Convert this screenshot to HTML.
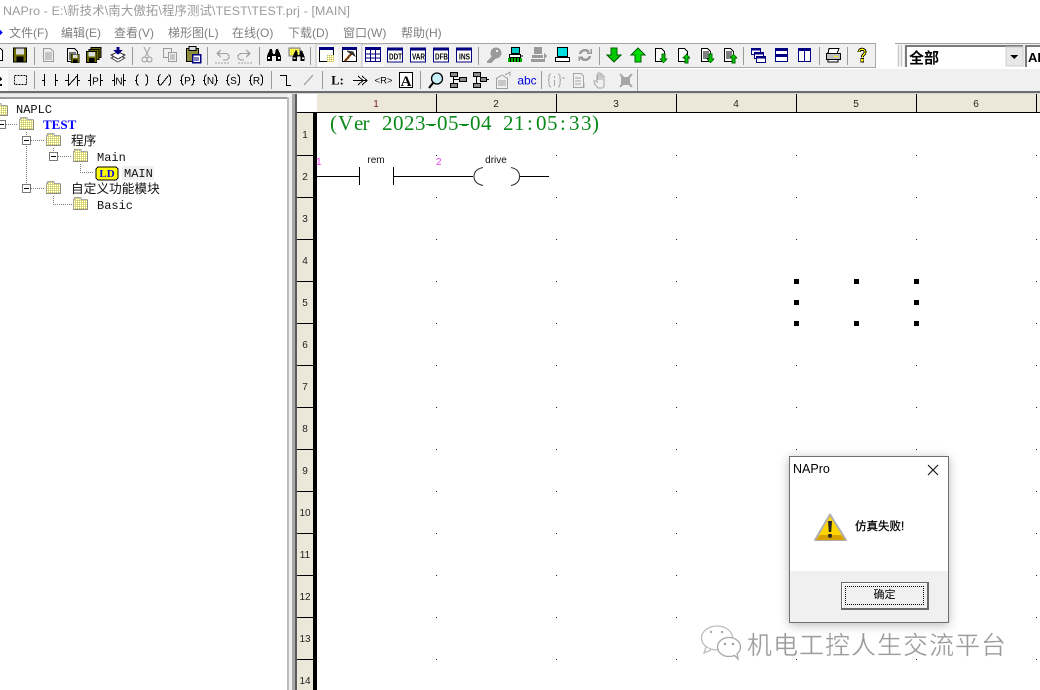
<!DOCTYPE html>
<html><head><meta charset="utf-8"><title>NAPro</title>
<style>
html,body{margin:0;padding:0;background:#fff;width:1040px;height:690px;overflow:hidden}
svg{display:block;position:absolute;left:0;top:0}
text{font-family:"Liberation Sans","Noto Sans CJK SC",sans-serif}
.m{font-size:12px;fill:#808080}
.n{font-size:10px;fill:#222;text-anchor:middle}
.t{font-family:"Liberation Mono","Noto Sans CJK SC",monospace;font-size:12px;fill:#111}
.c{font-family:"Liberation Sans","WenQuanYi Zen Hei",sans-serif;font-size:12.7px;fill:#111}
.s{fill:#9a9a9a}
.k{font-size:10px;fill:#000;text-anchor:middle}
.nv{fill:#fff;stroke:#000080;stroke-width:1.4}
.lb{font-size:8px;font-weight:bold;fill:#000}
</style></head><body>
<svg width="1040" height="690" viewBox="0 0 1040 690" shape-rendering="crispEdges">
<defs>
<pattern id="dots" x="436" y="155" width="120" height="42" patternUnits="userSpaceOnUse"><rect width="1" height="1" fill="#222"/></pattern>
<pattern id="dy" width="2" height="2" patternUnits="userSpaceOnUse"><rect width="2" height="2" fill="#f6f06a"/><rect width="1" height="1" fill="#b0b0a0"/><rect x="1" y="1" width="1" height="1" fill="#fff"/></pattern>
<g id="folder"><path d="M0 3h1V1h7v2h7v11H0z" fill="url(#dy)" stroke="none"/><path d="M0.5 13.5V3.5H1.5V1.5H8V3.5H14.5" fill="none" stroke="#a8a8a8"/><path d="M0 13.5H15M14.5 4V13" stroke="#8c8c8c" fill="none"/></g>
<g id="minus"><rect x=".5" y=".5" width="8" height="8" fill="#fff" stroke="#777"/><path d="M2 4.5h5" stroke="#000"/></g>
<g id="disk"><rect x="0.500" y="0.500" width="13" height="14" fill="#6c6c00" stroke="#000"/><rect x="3" y="1" width="8" height="6" fill="#ddd"/><rect x="3.500" y="9" width="7" height="6" fill="#000"/></g>
<g id="page"><path d="M2.500 1.500H9.500L12.500 4.500V14.500H2.500Z" fill="#f0f0f0" stroke="#000"/><path d="M4 6h7M4 8h7M4 10h7M4 12h7" stroke="#000" stroke-width=".8"/></g>
<g id="gpage"><path d="M2.500 1.500H9.500L12.500 4.500V14.500H2.500Z" fill="#f0f0f0" stroke="#9a9a9a"/><path d="M4 6h7M4 8h7M4 10h7M4 12h7" stroke="#9a9a9a" stroke-width=".8"/></g>
<g id="bino"><path d="M2 14V9L5 2H7L8 7H10L11 2H13L16 9V14H11V9H7V14Z" fill="#000"/><rect x="3" y="10" width="2" height="2" fill="#fff"/><rect x="13" y="10" width="2" height="2" fill="#fff"/></g>
<g id="dn"><path d="M5 1h6v7h4L8 15 1 8h4z" fill="#00c800" stroke="#006000"/></g>
<g id="up"><path d="M5 15h6V8h4L8 1 1 8h4z" fill="#00e000" stroke="#006000"/></g>
<g id="docs"><path d="M2.500 1.500H8.500L11.500 4.500V14.500H2.500Z" fill="#fff" stroke="#000"/></g>
<g id="lst"><path d="M1.500 1.500H7.500L10.500 4.500V14.500H1.500Z" fill="#fff" stroke="#000"/><path d="M3 5h6M3 7h6M3 9h6M3 11h6" stroke="#000" stroke-width=".8"/></g>
</defs>

<!-- title -->
<text x="3" y="15" textLength="347" lengthAdjust="spacing" style="font-size:12.4px;fill:#9b9b9b">NAPro - E:\新技术\南大傲拓\程序测试\TEST\TEST.prj - [MAIN]</text>

<!-- menu -->
<path d="M0 30l3 2.500-3 2.500z" fill="#00f"/>
<text class="m" x="9" y="37">文件(F)</text>
<text class="m" x="61" y="37">编辑(E)</text>
<text class="m" x="114" y="37">查看(V)</text>
<text class="m" x="168" y="37">梯形图(L)</text>
<text class="m" x="232" y="37">在线(O)</text>
<text class="m" x="288" y="37">下载(D)</text>
<text class="m" x="343" y="37">窗口(W)</text>
<text class="m" x="401" y="37">帮助(H)</text>

<!-- toolbars bg -->
<rect x="0" y="43" width="1040" height="49" fill="#f0f0f0"/>
<rect x="876" y="43" width="20" height="25" fill="#fff"/>
<rect x="0" y="43" width="875" height="1" fill="#a3a3a3"/>
<rect x="895" y="43" width="145" height="1" fill="#a3a3a3"/>
<rect x="0" y="67" width="875" height="1" fill="#a8a8a8"/>
<rect x="875" y="43" width="1" height="25" fill="#a8a8a8"/>
<rect x="895" y="67" width="145" height="1" fill="#fff"/>
<rect x="0" y="68" width="1040" height="1" fill="#fff"/>
<rect x="0" y="91" width="1040" height="2" fill="#6d6d6d"/>
<rect x="637" y="69" width="1" height="22" fill="#a8a8a8"/>
<rect x="0" y="93" width="1040" height="1" fill="#d8d8d8"/>

<!-- separators -->
<g class="s">
<rect x="34" y="47" width="1" height="18"/><rect x="132" y="47" width="1" height="18"/><rect x="207" y="47" width="1" height="18"/><rect x="259" y="47" width="1" height="18"/><rect x="310" y="47" width="1" height="18"/><rect x="478" y="47" width="1" height="18"/><rect x="599" y="47" width="1" height="18"/><rect x="743" y="47" width="1" height="18"/><rect x="819" y="47" width="1" height="18"/><rect x="847" y="47" width="1" height="18"/>
<rect x="34" y="71" width="1" height="18"/><rect x="271" y="71" width="1" height="18"/><rect x="322" y="71" width="1" height="18"/><rect x="420" y="71" width="1" height="18"/><rect x="541" y="71" width="1" height="18"/>
</g>

<!-- toolbar 1 icons -->
<path d="M-5 48.500H0.500L2.500 50.500V60.500H-5" fill="#fff" stroke="#000"/>
<use href="#disk" x="13" y="47.500"/>
<use href="#gpage" x="41" y="47"/>
<use href="#page" x="65" y="47"/><use href="#disk" transform="translate(71,54) scale(.6)"/>
<g transform="translate(86,47)"><rect x="5" y="0.500" width="10" height="10" fill="#6c6c00" stroke="#000"/><rect x="3" y="2.500" width="10" height="10" fill="#6c6c00" stroke="#000"/><use href="#disk" transform="translate(0,4) scale(.8)"/></g>
<g transform="translate(110,47)"><path d="M8 8L15 11 8 15 1 11Z" fill="#fff" stroke="#555"/><path d="M8 5L15 8 8 12 1 8Z" fill="#fff" stroke="#333"/><path d="M6.500 0h3v3h3L8 8 3.500 3h3z" fill="#000080"/></g>
<g transform="translate(139,47)" fill="none" stroke="#9a9a9a"><path d="M5 0L10 10M11 0L6 10"/><circle cx="5.500" cy="12.500" r="2.500"/><circle cx="10.500" cy="12.500" r="2.500"/></g>
<g transform="translate(162,47)" stroke="#9a9a9a" fill="#f0f0f0"><rect x="1.500" y="1.500" width="8" height="9"/><rect x="6.500" y="5.500" width="8" height="9"/><path d="M8 8h5M8 10h5M8 12h5" stroke-width=".8"/></g>
<g transform="translate(185,46)"><rect x="1.500" y="2.500" width="12" height="13" fill="#8c8c3c" stroke="#000"/><rect x="4" y="0.500" width="7" height="4" fill="#ddd" stroke="#000"/><rect x="7.500" y="8.500" width="8" height="8" fill="#fff" stroke="#000080" stroke-width="1.500"/><path d="M9 12h5M9 14h5" stroke="#000080"/></g>
<g transform="translate(214,48)" fill="none" stroke="#a0a0a0" stroke-width="1.200"><path d="M3 5.500H11C14 5.500 15 7 15 9S13 12 11 12H9"/><path d="M7 2L3 5.500 7 9"/><path d="M1 15H15" stroke-dasharray="2 1"/></g>
<g transform="translate(237,48)" fill="none" stroke="#a0a0a0" stroke-width="1.200"><path d="M13 5.500H5C2 5.500 1 7 1 9S3 12 5 12H7"/><path d="M9 2L13 5.500 9 9"/><path d="M1 15H15" stroke-dasharray="2 1"/></g>
<use href="#bino" x="265" y="47"/>
<g transform="translate(287,46)"><rect x="2" y="2" width="11" height="8" fill="url(#dy)" stroke="#777"/><rect x="3" y="3" width="9" height="6" fill="#ffff00" opacity=".6"/><use href="#bino" transform="translate(4,3) scale(.85)"/></g>

<rect x="316" y="44" width="22" height="23" fill="#fafafa"/><path d="M316 67V44H338" stroke="#bdbdbd" fill="none"/>
<g transform="translate(319,47)"><rect x=".5" y=".5" width="14" height="14" fill="#fff" stroke="#000"/><rect x="0" y="0" width="15" height="3" fill="#000080"/><rect x="8" y="8" width="7" height="7" fill="url(#dy)"/></g>
<g transform="translate(342,47)"><rect x=".5" y=".5" width="14" height="14" fill="#fff" stroke="#000"/><rect x="0" y="0" width="15" height="3" fill="#000080"/><path d="M3 14L10 6" stroke="#7a3a00" stroke-width="2.200"/><path d="M5 4L13 9 11 5Z" fill="#333" stroke="#333"/></g>
<rect x="362" y="44" width="22" height="23" fill="#fafafa"/><path d="M362 67V44H384" stroke="#bdbdbd" fill="none"/>
<g transform="translate(365,47)"><rect x=".5" y=".5" width="15" height="14" fill="#fff" stroke="#000080"/><rect x="0" y="0" width="16" height="3" fill="#000080"/><path d="M0 7H16M0 11H16M5.500 3V15M10.500 3V15" stroke="#000080"/></g>

<g transform="translate(387,47.500)"><rect x=".5" y=".5" width="15" height="14" fill="#fff" stroke="#000080"/><rect width="16" height="3" fill="#000080"/><text class="lb" x="2" y="12" textLength="13" lengthAdjust="spacingAndGlyphs">DDT</text></g>
<g transform="translate(410,47.500)"><rect x=".5" y=".5" width="15" height="14" fill="#fff" stroke="#000080"/><rect width="16" height="3" fill="#000080"/><text class="lb" x="2" y="12" textLength="13" lengthAdjust="spacingAndGlyphs">VAR</text></g>
<g transform="translate(433,47.500)"><rect x=".5" y=".5" width="15" height="14" fill="#fff" stroke="#000080"/><rect width="16" height="3" fill="#000080"/><text class="lb" x="2" y="12" textLength="13" lengthAdjust="spacingAndGlyphs">DFB</text></g>
<g transform="translate(456,47.500)"><rect x=".5" y=".5" width="15" height="14" fill="#fff" stroke="#000080"/><rect width="16" height="3" fill="#000080"/><text class="lb" x="3" y="12" textLength="11" lengthAdjust="spacingAndGlyphs">INS</text></g>

<g transform="translate(486,47)"><circle cx="10" cy="6" r="5.500" fill="#9a9a9a"/><path d="M7 8L1 14V16H5L11 10" fill="#9a9a9a"/><rect x="10" y="3" width="2" height="2" fill="#f0f0f0"/></g>
<g transform="translate(507,47)"><rect x="4.500" y="0.500" width="8" height="6" fill="#00c8c8" stroke="#000"/><rect x="2.500" y="7.500" width="11" height="3" fill="#fff" stroke="#000"/><path d="M13 9h3" stroke="#000"/><rect x="1" y="11" width="14" height="4" fill="#00b000"/><path d="M3.500 11v4M6.500 11v4M9.500 11v4M12.500 11v4" stroke="#000"/></g>
<g transform="translate(530,47)" fill="#9a9a9a"><rect x="4" y="0" width="8" height="7"/><rect x="2" y="8" width="11" height="3"/><rect x="1" y="12" width="14" height="3"/><path d="M14 6l3 3-3 3z"/></g>
<g transform="translate(554,47)"><rect x="3.500" y="0.500" width="10" height="9" fill="#00e0e0" stroke="#000"/><rect x="1.500" y="10.500" width="14" height="4" fill="#fff" stroke="#000"/></g>
<g transform="translate(577,47)" fill="none" stroke="#9a9a9a" stroke-width="2.500"><path d="M3 7C4 3 9 2 12 5"/><path d="M13 9C12 13 7 14 4 11"/><path d="M10 6H14V2" stroke-width="1.500"/><path d="M6 10H2V14" stroke-width="1.500"/></g>
<use href="#dn" x="606" y="47"/><use href="#up" x="630" y="47"/>
<g transform="translate(653,47)"><use href="#docs"/><path d="M9 7h3v5h2l-3.500 4L7 12h2z" fill="#00c800" stroke="#006000" stroke-width=".7"/></g>
<g transform="translate(676,47)"><use href="#docs"/><path d="M9 16h3v-5h2L10.500 7 7 11h2z" fill="#00c800" stroke="#006000" stroke-width=".7"/></g>
<g transform="translate(700,47)"><use href="#lst"/><path d="M9 7h3v5h2l-3.500 4L7 12h2z" fill="#00c800" stroke="#006000" stroke-width=".7"/></g>
<g transform="translate(723,47)"><use href="#lst"/><path d="M9 16h3v-5h2L10.500 7 7 11h2z" fill="#00c800" stroke="#006000" stroke-width=".7"/></g>
<g transform="translate(751,48)"><rect class="nv" x="0.500" y="0.500" width="9" height="6"/><rect x="0" y="0" width="10" height="2.500" fill="#000080"/><rect class="nv" x="3.500" y="4.500" width="9" height="6"/><rect x="3" y="4" width="10" height="2.500" fill="#000080"/><rect class="nv" x="5.500" y="8.500" width="9" height="6"/><rect x="5" y="8" width="10" height="2.500" fill="#000080"/></g>
<g transform="translate(775,48)"><rect x=".5" y=".5" width="12" height="13" fill="#fff" stroke="#000080" stroke-width="1.300"/><rect width="13" height="3" fill="#000080"/><rect y="6" width="13" height="3" fill="#000080"/></g>
<g transform="translate(798,48)"><rect x=".5" y=".5" width="12" height="13" fill="#fff" stroke="#000080" stroke-width="1.300"/><rect width="13" height="3" fill="#000080"/><rect x="6" width="1" height="14" fill="#000080"/></g>
<g transform="translate(825,48)"><path d="M4 .5H14L12 5.500H3Z" fill="#fff" stroke="#000"/><path d="M1.500 5.500H15.500V11.500H1.500Z" fill="#c0c0c0" stroke="#000"/><path d="M3 11.500H13V14H3Z" fill="#fff" stroke="#000"/><rect x="9" y="8" width="4" height="1" fill="#ff0"/></g>
<g transform="translate(856.500,47.500) scale(.72,.85)" fill="none"><path d="M3.500 5.500C3.500 1 12 1 12 5.500C12 8 8 8.500 8 11.500" stroke="#000" stroke-width="3.800"/><path d="M3.500 5.500C3.500 1 12 1 12 5.500C12 8 8 8.500 8 11.500" stroke="#ff0" stroke-width="1.600"/><rect x="6" y="13" width="4" height="4" fill="#ff0" stroke="#000"/></g>

<!-- combos -->
<rect x="896" y="44" width="1" height="23" fill="#fff"/><rect x="898" y="45" width="1" height="21" fill="#c8c8c8"/><rect x="901" y="45" width="1" height="21" fill="#c8c8c8"/><rect x="903" y="45" width="1" height="21" fill="#fff"/>
<rect x="906" y="46" width="117" height="21" fill="#fff"/>
<path d="M906 67V46H1023" fill="none" stroke="#7a7a7a" stroke-width="2"/>
<rect x="1006" y="47" width="17" height="19" fill="#e8e8e8" stroke="#cfcfcf"/>
<path d="M1010 55h8l-4 4z" fill="#000"/>
<text x="909" y="63" style="font-size:15px;font-weight:bold;fill:#000;font-family:'WenQuanYi Zen Hei','Noto Sans CJK SC',sans-serif">全部</text>
<rect x="1026" y="46" width="14" height="21" fill="#fff"/>
<path d="M1026 67V46H1040" fill="none" stroke="#7a7a7a" stroke-width="2"/>
<text x="1028" y="62" style="font-size:13px;font-weight:bold;fill:#000">AD</text>

<!-- toolbar 2 -->
<rect x="0" y="69" width="8" height="22" fill="#fafafa"/>
<path d="M0 77l2 2-2 2zM0 84h2v2H0z" fill="#000"/>
<rect x="14.500" y="75.500" width="12" height="9" fill="none" stroke="#000" stroke-dasharray="2 1"/>
<g stroke="#000" fill="none">
<path d="M42 80.500h2M44.500 74v12M55.500 74v12M56 80.500h2"/>
<path d="M65 80.500h3M68.500 74v12M77.500 74v12M78 80.500h2M69 85l8-9"/>
<path d="M88 80.500h2M90.500 74v12M100.500 74v12M101 80.500h2"/>
<path d="M112 80.500h2M114.500 74v12M123.500 74v12M124 80.500h2"/>
<path d="M135 80.500h1M138.500 74.500c-2 1-2 3-2 5.500s0 4.500 2 5.500M145.500 74.500c2 1 2 3 2 5.500s0 4.500-2 5.500M147 80.500h1"/>
<path d="M157 80.500h1M160.500 74.500c-2 1-2 3-2 5.500s0 4.500 2 5.500M168.500 74.500c2 1 2 3 2 5.500s0 4.500-2 5.500M170 80.500h1M161 85l7-9"/>
<path d="M180 80.500h1M183.500 74.500c-2 1-2 3-2 5.500s0 4.500 2 5.500M191.500 74.500c2 1 2 3 2 5.500s0 4.500-2 5.500M193 80.500h2"/>
<path d="M203 80.500h1M206.500 74.500c-2 1-2 3-2 5.500s0 4.500 2 5.500M214.500 74.500c2 1 2 3 2 5.500s0 4.500-2 5.500M216 80.500h2"/>
<path d="M226 80.500h1M229.500 74.500c-2 1-2 3-2 5.500s0 4.500 2 5.500M237.500 74.500c2 1 2 3 2 5.500s0 4.500-2 5.500M239 80.500h1"/>
<path d="M249 80.500h1M252.500 74.500c-2 1-2 3-2 5.500s0 4.500 2 5.500M260.500 74.500c2 1 2 3 2 5.500s0 4.500-2 5.500M262 80.500h1"/>
<path d="M280 75.500h6.500V85.500H291"/>
</g>
<path d="M304 85l9-10" stroke="#a8a8a8" fill="none" stroke-width="1.400" shape-rendering="auto"/>
<text class="k" x="95.500" y="84.500">P</text>
<text class="k" x="119" y="84.500">N</text>
<text class="k" x="187.500" y="84">P</text>
<text class="k" x="210.500" y="84">N</text>
<text class="k" x="233.500" y="84">S</text>
<text class="k" x="256.500" y="84">R</text>
<text x="337.500" y="84.500" text-anchor="middle" style="font-family:'Liberation Serif',serif;font-size:12.500px;font-weight:bold;fill:#000">L:</text>
<path d="M353 80.500h13M358 76l5 4.500-5 4.500M362 76l5 4.500-5 4.500" fill="none" stroke="#000"/>
<text x="383.500" y="83.500" text-anchor="middle" style="font-size:9.500px;fill:#000">&lt;R&gt;</text>
<rect x="399.500" y="72.500" width="13" height="15" fill="#fff" stroke="#000"/>
<text x="406" y="86" text-anchor="middle" style="font-family:'Liberation Serif',serif;font-size:15px;font-weight:bold;fill:#000">A</text>
<g shape-rendering="auto"><circle cx="437" cy="78.500" r="5.500" fill="#c8f0f8" stroke="#000" stroke-width="1.300"/><path d="M433 83l-4 5" stroke="#000" stroke-width="2"/></g>
<g stroke="#000" fill="#8c8c8c"><rect x="450.500" y="72.500" width="7" height="4"/><rect x="450.500" y="83.500" width="7" height="4"/><rect x="459.500" y="77.500" width="7" height="4"/><path d="M453.500 77v6M454 79.500h5" fill="none"/></g>
<g stroke="#000" fill="#8c8c8c"><rect x="473.500" y="72.500" width="7" height="4"/><rect x="473.500" y="83.500" width="7" height="4"/><rect x="480.500" y="77.500" width="6" height="4"/><path d="M476.500 77v6M487 79.500h2" fill="none"/></g>
<g fill="none" stroke="#a0a0a0"><path d="M496.500 78.500L502 75l5.500 3.500V88.500H496.500Z"/><path d="M498 81h8M498 83h8M498 85h8M505 75l5-3v4"/></g>
<text x="527" y="84.500" text-anchor="middle" style="font-size:12px;fill:#0000e0">abc</text>
<g fill="none" stroke="#a6a6a6"><path d="M551 74c-2 0-2 2-2 4s-1 2-1 2 1 0 1 2 0 5 2 5M558 74c2 0 2 2 2 4s1 2 1 2-1 0-1 2 0 5-2 5M554.500 76v2M554.500 80v6M562 78h3"/>
<path d="M573.500 73.500H581L583.500 76V87.500H573.500ZM575 78h6M575 81h6M575 84h6M584 83v5l-2-1"/>
<path d="M598 88c-3-3-4-5-4-7 1-1 2 0 3 1V75h1v5-7h2v7-6h2v6-4h2v9c0 2-1 3-2 3z"/>
<path d="M620 74l12 13M632 74l-12 13" stroke-width="2"/></g>
<rect x="621" y="77" width="9" height="8" fill="#a6a6a6"/>

<!-- left pane -->
<rect x="0" y="94" width="297" height="596" fill="#fff"/>
<rect x="0" y="94" width="288" height="3" fill="#ededed"/>
<rect x="0" y="97" width="288" height="2" fill="#9c9c9c"/>
<rect x="287" y="97" width="2" height="593" fill="#bcbcbc"/>
<rect x="289" y="94" width="3" height="596" fill="#f0f0f0"/>
<rect x="292" y="94" width="3" height="596" fill="#a8a8a8"/>
<rect x="295" y="94" width="2" height="596" fill="#5c5c5c"/>

<!-- tree lines -->
<g stroke="#777" stroke-dasharray="1 1" fill="none">
<path d="M6 124.500H17"/>
<path d="M26.500 132V188"/><path d="M31 140.500H45M31 188.500H45"/>
<path d="M53.500 148V156"/><path d="M58 156.500H72"/>
<path d="M80.500 164V172.500H94"/>
<path d="M53.500 196V204.500H72"/>
</g>
<use href="#folder" x="-7" y="102"/>
<use href="#minus" x="-3" y="120"/>
<use href="#folder" x="19" y="116"/>
<use href="#minus" x="22" y="136"/><use href="#folder" x="46" y="132"/>
<use href="#minus" x="49" y="152"/><use href="#folder" x="73" y="148"/>
<use href="#minus" x="22" y="184"/><use href="#folder" x="46" y="180"/>
<use href="#folder" x="73" y="196"/>
<text class="t" x="16" y="113" style="font-size:12px">NAPLC</text>
<text x="43" y="129" style="font-family:'Liberation Serif',serif;font-size:13px;font-weight:bold;fill:#0000ff">TEST</text>
<text class="c" x="71" y="145">程序</text>
<text class="t" x="97" y="161">Main</text>
<rect x="96" y="167" width="22" height="13" rx="3" fill="#ffff00" stroke="#000" stroke-width="1"/>
<text x="107" y="177" text-anchor="middle" style="font-family:'Liberation Serif',serif;font-size:11px;font-weight:bold;fill:#0000e0">LD</text>
<rect x="122" y="166" width="32" height="14" fill="#f0f0f0"/>
<text class="t" x="124" y="177">MAIN</text>
<text class="c" x="71" y="193">自定义功能模块</text>
<text class="t" x="97" y="209">Basic</text>

<!-- grid -->
<rect x="297" y="94" width="743" height="596" fill="#fff"/>
<rect x="317" y="94" width="723" height="18" fill="#ebe8d9"/>
<rect x="317" y="112" width="723" height="1" fill="#000"/>
<rect x="436" y="94" width="1" height="18" fill="#000"/><rect x="556" y="94" width="1" height="18" fill="#000"/><rect x="676" y="94" width="1" height="18" fill="#000"/><rect x="796" y="94" width="1" height="18" fill="#000"/><rect x="916" y="94" width="1" height="18" fill="#000"/><rect x="1036" y="94" width="1" height="18" fill="#000"/>
<rect x="297" y="113" width="16" height="577" fill="#ebe8d9"/>
<rect x="297" y="112" width="16" height="1" fill="#000"/>
<rect x="313" y="112" width="4" height="578" fill="#000"/>
<g fill="#000"><rect x="297" y="155" width="16" height="1"/><rect x="297" y="197" width="16" height="1"/><rect x="297" y="239" width="16" height="1"/><rect x="297" y="281" width="16" height="1"/><rect x="297" y="323" width="16" height="1"/><rect x="297" y="365" width="16" height="1"/><rect x="297" y="407" width="16" height="1"/><rect x="297" y="449" width="16" height="1"/><rect x="297" y="491" width="16" height="1"/><rect x="297" y="533" width="16" height="1"/><rect x="297" y="575" width="16" height="1"/><rect x="297" y="617" width="16" height="1"/><rect x="297" y="659" width="16" height="1"/></g>
<g shape-rendering="auto">
<text class="n" x="376" y="107" style="fill:#702030">1</text><text class="n" x="496" y="107">2</text><text class="n" x="616" y="107">3</text><text class="n" x="736" y="107">4</text><text class="n" x="856" y="107">5</text><text class="n" x="976" y="107">6</text>
<text class="n" x="305" y="138">1</text><text class="n" x="305" y="180">2</text><text class="n" x="305" y="222">3</text><text class="n" x="305" y="264">4</text><text class="n" x="305" y="306">5</text><text class="n" x="305" y="348">6</text><text class="n" x="305" y="390">7</text><text class="n" x="305" y="432">8</text><text class="n" x="305" y="474">9</text><text class="n" x="305" y="516">10</text><text class="n" x="305" y="558">11</text><text class="n" x="305" y="600">12</text><text class="n" x="305" y="642">13</text><text class="n" x="305" y="684">14</text>
</g>
<rect x="436" y="155" width="604" height="535" fill="url(#dots)"/>

<text x="330 338 354 362.500 372 382 393 404 415 428 437 448 461 470 481 492 503 514 527 536 547 560 569 581 592" y="130" style="font-family:'Liberation Serif',serif;font-size:21px;fill:#0a8a1a">(Ver 2023-05-04 21:05:33)</text>
<rect x="426" y="124" width="10" height="1" fill="#0a8a1a"/><rect x="459" y="124" width="10" height="1" fill="#0a8a1a"/>

<!-- rung -->
<g stroke="#000" fill="none"><path d="M317 176.500H359M359.500 167V185M393.500 167V185M394 176.500H473M520 176.500H549"/></g>
<g shape-rendering="auto" fill="none" stroke="#333" stroke-width="1.100"><path d="M483 167.500C476 169 474 173 474 176.500S476 184 483 185.500"/><path d="M511 167.500C518 169 519.500 173 519.500 176.500S518 184 511 185.500"/></g>
<text x="376" y="163" text-anchor="middle" style="font-size:10px;fill:#111">rem</text>
<text x="496" y="163" text-anchor="middle" style="font-size:10px;fill:#111">drive</text>
<text x="316" y="165" style="font-size:10px;fill:#f040f0">1</text>
<text x="436" y="165" style="font-size:10px;fill:#f040f0">2</text>

<!-- handles -->
<g fill="#000"><rect x="794" y="279" width="5" height="5"/><rect x="854" y="279" width="5" height="5"/><rect x="914" y="279" width="5" height="5"/><rect x="794" y="300" width="5" height="5"/><rect x="914" y="300" width="5" height="5"/><rect x="794" y="321" width="5" height="5"/><rect x="854" y="321" width="5" height="5"/><rect x="914" y="321" width="5" height="5"/></g>

<!-- watermark -->
<g shape-rendering="auto" fill="none">
<ellipse cx="717" cy="638" rx="15.500" ry="12" stroke="#bdbdbd" stroke-width="1.300" fill="#fff"/>
<path d="M706 647l-2 6 7-3" stroke="#bdbdbd" stroke-width="1.300" fill="#fff"/>
<ellipse cx="729" cy="647" rx="11.500" ry="9.500" stroke="#a8a8a8" stroke-width="1.300" fill="#fff"/>
<path d="M734 655l4 4-1-6" stroke="#a8a8a8" stroke-width="1.300" fill="#fff"/>
<circle cx="711" cy="632" r="1.200" fill="#aaa"/><circle cx="722" cy="632" r="1.200" fill="#aaa"/>
<circle cx="725" cy="644" r="1.200" fill="#999"/><circle cx="733" cy="644" r="1.200" fill="#999"/>
</g>
<text x="747" y="654" textLength="259" lengthAdjust="spacing" style="font-family:'WenQuanYi Zen Hei','Noto Sans CJK SC',sans-serif;font-size:25px;fill:#9c9c9c;stroke:#fff;stroke-width:.3px" shape-rendering="auto">机电工控人生交流平台</text>
</svg>

<!-- dialog -->
<div style="position:absolute;left:789px;top:456px;width:158px;height:165px;border:1px solid #6f6f6f;background:#fff;box-shadow:0 2px 10px rgba(0,0,0,.28);font-family:'Liberation Sans','Noto Sans CJK SC',sans-serif;color:#000">
<div style="position:absolute;left:3px;top:5px;font-size:12.5px;line-height:14px">NAPro</div>
<svg width="12" height="12" viewBox="0 0 12 12" style="left:137px;top:7px"><path d="M1 1L11 11M11 1L1 11" stroke="#111" stroke-width="1.100" fill="none"/></svg>
<svg width="34" height="30" viewBox="0 0 34 30" style="left:24px;top:56px"><path d="M16 1.500L32 27H1Z" fill="#ffd500" stroke="#b0b0b0" stroke-width="2" stroke-linejoin="round"/><path d="M2 27H31L27 22H6Z" fill="#d8a000"/><path d="M14 8h4l-.8 11h-2.400z" fill="#222"/><rect x="14.200" y="21" width="3.600" height="3.600" fill="#222"/></svg>
<div style="position:absolute;left:65px;top:63px;font-size:11.500px;line-height:14px;-webkit-text-stroke:.25px #000;white-space:nowrap">仿真失败!</div>
<div style="position:absolute;left:0;top:114px;width:158px;height:51px;background:#f0f0f0"></div>
<div style="position:absolute;left:51px;top:125px;width:85px;height:25px;border:1px solid #6a6a6a;border-right-width:2px;border-bottom-width:2px;background:#f0f0f0;box-shadow:inset 1px 1px 0 #fff">
<div style="position:absolute;left:3px;top:3px;width:77px;height:17px;border:1px dotted #000;text-align:center;font-size:11px;line-height:17px">确定</div></div>
</div>
</body></html>
